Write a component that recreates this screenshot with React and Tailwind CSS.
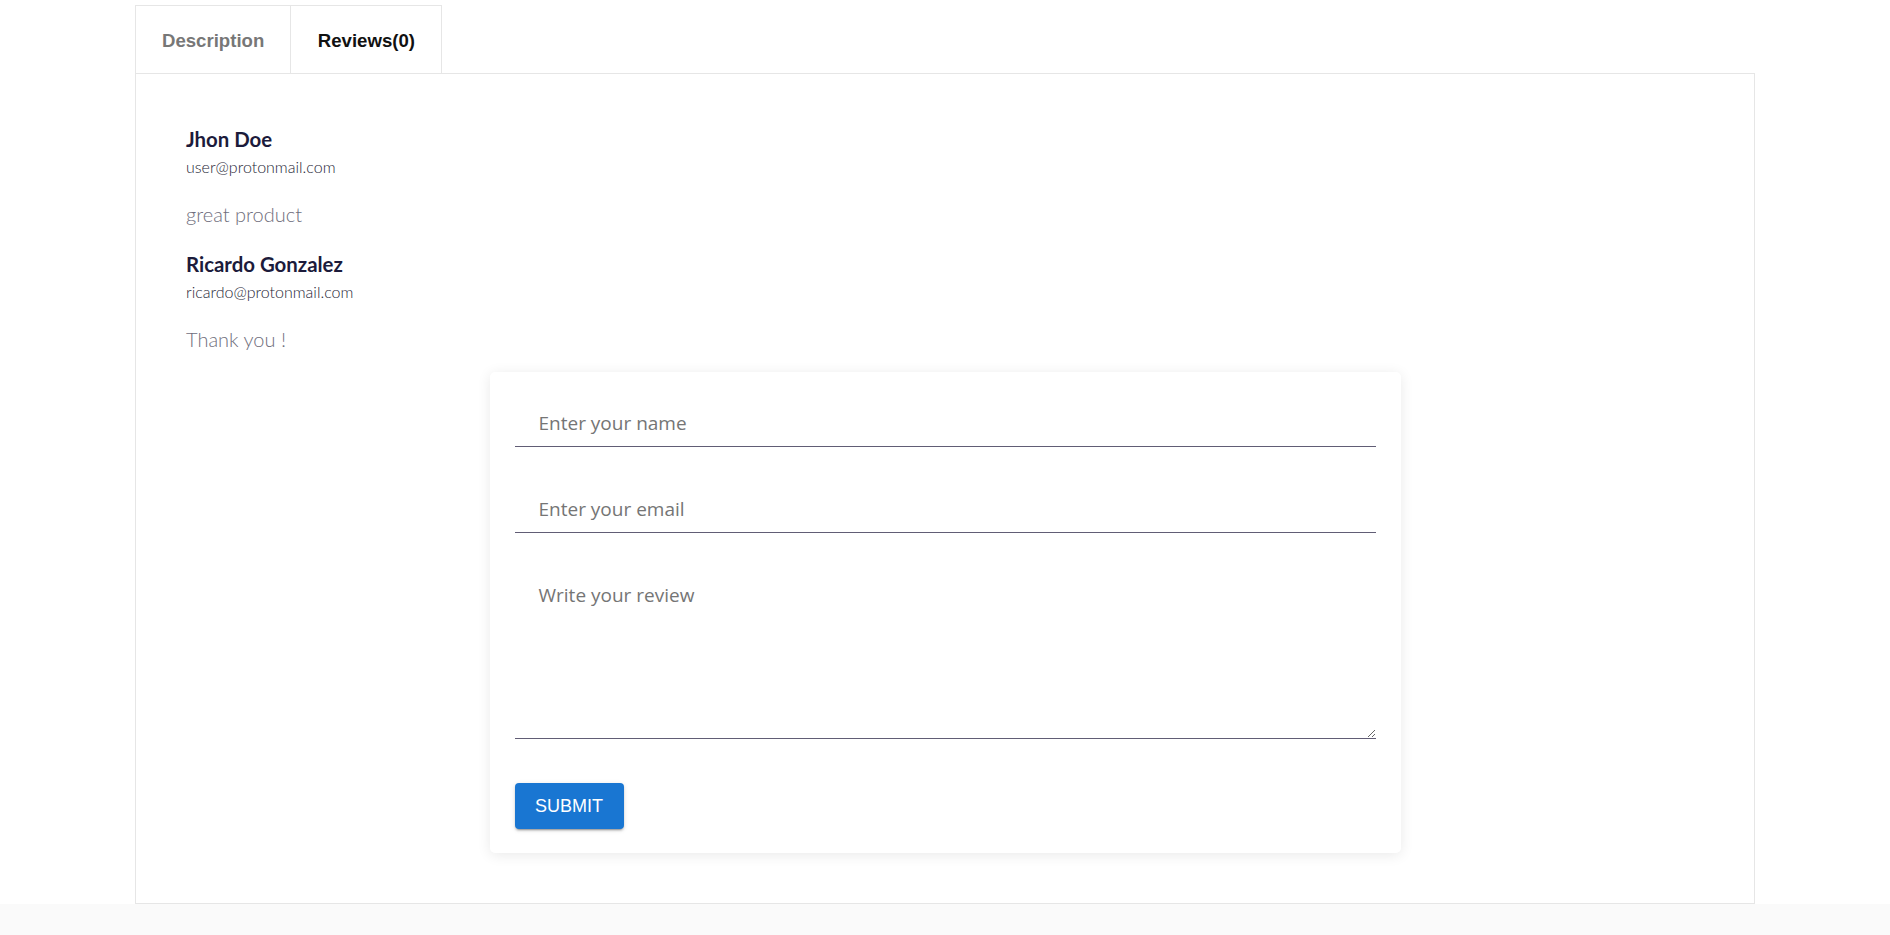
import React from "react";

const reviews = [
  { name: "Jhon Doe", email: "user@protonmail.com", text: "great product" },
  { name: "Ricardo Gonzalez", email: "ricardo@protonmail.com", text: "Thank you !" },
];

export default function App() {
  return (
    <div className="min-h-screen bg-[#fafafa]">
      <div className="bg-white pt-[5px]">
        <div className="w-[1620px] mx-auto">
          <div className="flex font-['Liberation_Sans',Arial,sans-serif] text-[18.6px] font-bold leading-[20px]">
            <button className="border border-b-0 border-[#e6e6e6] bg-white px-[26px] pt-[25px] pb-[22px] text-[#777777]">
              Description
            </button>
            <button className="border border-b-0 border-[#e6e6e6] bg-white px-[26.5px] pt-[25px] pb-[22px] text-[#111111] -ml-px">
              Reviews(0)
            </button>
          </div>
          <div className="border border-[#e6e6e6] px-[50px] pt-[53px] pb-[50px]">
            <div className="flex flex-col gap-[26px] font-['Lato',sans-serif]">
              {reviews.map((r) => (
                <div key={r.email} className="flex flex-col">
                  <div className="text-[20.4px] leading-[24px] font-bold text-[#1c1b3b]">{r.name}</div>
                  <div className="mt-[6px] text-[16px] leading-[19px] font-light text-[#262636]">{r.email}</div>
                  <div className="mt-[26px] text-[20px] leading-[24px] font-light text-[#6f6e7c]">{r.text}</div>
                </div>
              ))}
            </div>
            <form
              className="mt-[21px] w-[911px] mx-auto bg-white rounded-[5px] shadow-[0_2px_14px_rgba(0,0,0,0.09)] px-[25px] pt-[25px] pb-[24px] flex flex-col font-['Open_Sans',sans-serif]"
              onSubmit={(e) => e.preventDefault()}
            >
              <input
                type="text"
                placeholder="Enter your name"
                className="block w-full h-[50px] border-b border-[#615d75] pl-[24px] pt-[14px] pb-[11px] text-[19px] leading-6 outline-none placeholder:text-[#757575]"
              />
              <input
                type="email"
                placeholder="Enter your email"
                className="block mt-[36px] w-full h-[50px] border-b border-[#615d75] pl-[24px] pt-[14px] pb-[11px] text-[19px] leading-6 outline-none placeholder:text-[#757575]"
              />
              <textarea
                placeholder="Write your review"
                className="block mt-[36px] w-full h-[170px] border-b border-[#615d75] pl-[24px] pt-[14px] text-[19px] leading-6 outline-none placeholder:text-[#757575]"
              />
              <div className="mt-[44px]">
                <button
                  type="submit"
                  className="w-[109px] h-[46px] rounded-[4px] bg-[#1976d2] text-white font-['Liberation_Sans',Arial,sans-serif] text-[18px] leading-none shadow-[0_3px_1px_-2px_rgba(0,0,0,0.2),0_2px_2px_0_rgba(0,0,0,0.14),0_1px_5px_0_rgba(0,0,0,0.12)]"
                >
                  SUBMIT
                </button>
              </div>
            </form>
          </div>
        </div>
      </div>
    </div>
  );
}
